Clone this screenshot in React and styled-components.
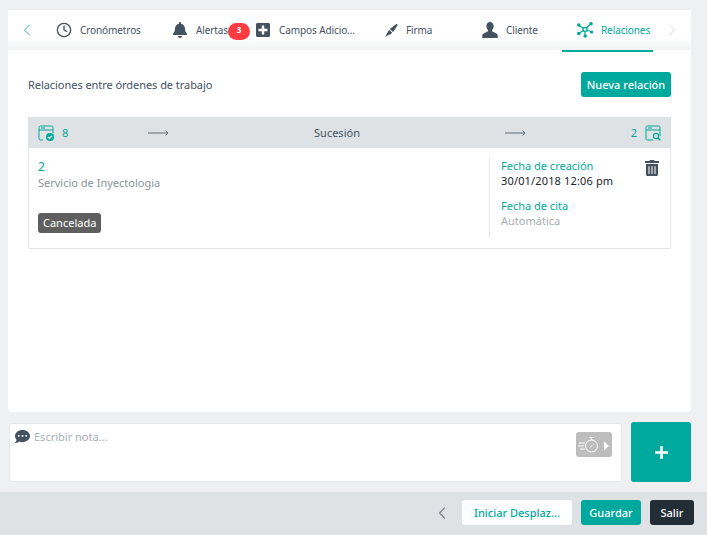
import React from "react";
import styled, { createGlobalStyle } from "styled-components";
import { FaBell, FaPlusSquare, FaTrashAlt, FaCommentDots } from "react-icons/fa";
import { FiClock, FiChevronLeft, FiChevronRight } from "react-icons/fi";

const teal = "#00a99d";
const slate = "#44525f";

const GlobalStyle = createGlobalStyle`
  html, body { margin: 0; padding: 0; height: 100%; background: #eef0f2; overflow: hidden; }
  body { font-family: "Noto Sans", "Open Sans", sans-serif; font-size: 11px; }
  * { box-sizing: border-box; }
`;

const Page = styled.div`
  width: 707px;
  height: 535px;
  display: flex;
  flex-direction: column;
  padding-top: 10px;
`;

const Panel = styled.div`
  margin: 0 16px 0 8px;
  height: 402px;
  background: #fff;
  border-radius: 4px;
  flex-shrink: 0;
`;

const TabBar = styled.div`
  height: 42px;
  display: flex;
  align-items: stretch;
  background: linear-gradient(#fff 70%, #f3f4f5 100%) 0 0 / 100% 40px no-repeat;
`;

const Chevron = styled.button`
  width: ${p => p.$width}px;
  height: 40px;
  padding: 0 0 0 ${p => p.$pad || 0}px;
  border: 0;
  background: none;
  color: ${p => p.$color};
  display: flex;
  align-items: center;
  justify-content: center;
`;

const Tab = styled.div`
  position: relative;
  width: ${p => p.$width}px;
  display: flex;
  align-items: center;
  gap: 8px;
  height: 42px;
  padding: 0 0 0 15px;
  color: ${p => (p.$active ? teal : slate)};
  border-bottom: 2px solid ${p => (p.$active ? teal : "transparent")};
  font-size: 10px;
  letter-spacing: -0.1px;
  white-space: nowrap;
  svg { flex-shrink: 0; }
`;

const Badge = styled.span`
  position: absolute;
  left: 71px;
  top: 13px;
  width: 22px;
  height: 17px;
  border-radius: 9px;
  background: #ff3b41;
  color: #fff;
  font-size: 8px;
  font-weight: 700;
  text-align: center;
  line-height: 14px;
`;

const Content = styled.div`
  padding: 20px 20px 0;
`;

const Heading = styled.div`
  display: flex;
  align-items: center;
  justify-content: space-between;
  height: 25px;
  margin-bottom: 20px;
  color: ${slate};
  letter-spacing: -0.05px;
`;

const Button = styled.button`
  height: 25px;
  padding: 0;
  width: ${p => p.$width}px;
  border: 0;
  border-radius: 3px;
  background: ${p => p.$bg || teal};
  color: ${p => p.$color || "#fff"};
  font: inherit;
  font-size: 11px;
  font-weight: 500;
`;

const Card = styled.div`
  border: 1px solid #e2e4e6;
  border-top: 0;
  border-radius: 2px;
`;

const CardHeader = styled.div`
  height: 31px;
  margin: 0 -1px;
  background: #dfe2e5;
  display: grid;
  grid-template-columns: 131px 1fr 156px;
  align-items: center;
  padding: 0 10px;
  color: ${slate};
`;

const Side = styled.div`
  display: flex;
  align-items: center;
  gap: 8px;
  color: ${teal};
  svg { flex-shrink: 0; }
`;

const Arrow = styled.svg`
  display: block;
  margin-left: ${p => p.$offset}px;
  margin-right: auto;
`;

const Center = styled.div`
  text-align: center;
`;

const CardBody = styled.div`
  display: flex;
  height: 100px;
  padding: 10px 10px 10px 9px;
`;

const Info = styled.div`
  flex: 1;
  display: flex;
  flex-direction: column;
  align-items: flex-start;
`;

const Code = styled.div`
  color: ${teal};
  font-size: 12px;
  line-height: 17px;
`;

const Service = styled.div`
  color: #8c949b;
  line-height: 15px;
`;

const Status = styled.span`
  margin-top: 23px;
  height: 20px;
  padding: 0 5px;
  line-height: 20px;
  border-radius: 3px;
  background: #5f5f5f;
  color: #fff;
`;

const Dates = styled.div`
  position: relative;
  width: 171px;
  padding: 0 0 0 11px;
  border-left: 1px solid #e2e4e6;
`;

const DateLabel = styled.div`
  color: ${teal};
  line-height: 15px;
  margin-top: ${p => (p.$spaced ? 10 : 0)}px;
`;

const DateValue = styled.div`
  color: ${p => (p.$muted ? "#a7adb2" : "#20262c")};
  line-height: 15px;
  letter-spacing: ${p => (p.$muted ? 0 : 0.15)}px;
`;

const Trash = styled.div`
  position: absolute;
  top: 2px;
  right: 0;
  color: ${slate};
  font-size: 16px;
  line-height: 0;
`;

const Composer = styled.div`
  display: flex;
  gap: 9px;
  margin: 10px 16px 0 9px;
  height: 60px;
`;

const NoteBox = styled.div`
  position: relative;
  flex: 1;
  margin-top: 1px;
  height: 59px;
  background: #fff;
  border: 1px solid #e6e8ea;
  border-radius: 3px;
  padding: 5px;
  display: flex;
  gap: 4px;
  color: #a9b0b6;
`;

const NoteIcon = styled.div`
  color: ${slate};
  font-size: 15px;
  line-height: 0;
`;

const Timer = styled.div`
  position: absolute;
  top: 8px;
  right: 9px;
  width: 36px;
  height: 25px;
  border-radius: 3px;
  background: #bdbdbd;
  display: flex;
  align-items: center;
  justify-content: center;
`;

const AddButton = styled.button`
  width: 60px;
  height: 60px;
  padding: 0;
  border: 0;
  border-radius: 3px;
  background: ${teal};
  display: flex;
  align-items: center;
  justify-content: center;
`;

const Footer = styled.div`
  flex: 1;
  margin-top: 10px;
  background: #dfe2e5;
  display: flex;
  align-items: flex-start;
  justify-content: flex-end;
  gap: 9px;
  padding: 8px 13px 0 0;
`;

const Back = styled.div`
  height: 25px;
  margin-right: 1px;
  color: #7b8790;
  display: flex;
  align-items: center;
`;

const BrowserCheck = () => (
  <svg width="16" height="16" viewBox="0 0 16 16" fill="none">
    <path d="M5 15H2.500A1.500 1.500 0 0 1 1 13.500v-11A1.500 1.500 0 0 1 2.500 1h11A1.500 1.500 0 0 1 15 2.500V8" stroke={teal} />
    <path d="M1 5h14" stroke={teal} />
    <path d="M3 3h4" stroke={teal} />
    <circle cx="12" cy="12" r="4" fill={teal} />
    <path d="M10 12l1.500 1.500L14 10.800" stroke="#fff" strokeWidth="1.200" />
  </svg>
);

const BrowserSearch = () => (
  <svg width="16" height="16" viewBox="0 0 16 16" fill="none" stroke={teal}>
    <path d="M8 15H2.500A1.500 1.500 0 0 1 1 13.500v-11A1.500 1.500 0 0 1 2.500 1h11A1.500 1.500 0 0 1 15 2.500V11" />
    <path d="M1 5h14M3 3h4" />
    <circle cx="11" cy="11" r="2.600" strokeWidth="1.200" />
    <path d="M13 13l2.300 2.300" strokeWidth="1.500" />
  </svg>
);

const LongArrow = ({ offset }) => (
  <Arrow $offset={offset} width="21" height="8" viewBox="0 0 21 8" fill="none" stroke="#5d6a75">
    <path d="M0 4h20M17.500 1.500L20 4l-2.500 2.500" />
  </Arrow>
);

const UserBust = () => (
  <svg width="16" height="16" viewBox="0 0 16 16" fill={slate}>
    <path d="M8 0c2.300 0 3.600 1.700 3.600 4 0 1.700-.7 3.200-1.500 4.100-.3.500-.2 1.200.4 1.500l3.400 1.600c1.200.6 1.800 1.300 1.800 2.300V16H.3v-2.500c0-1 .6-1.700 1.800-2.300l3.400-1.600c.6-.3.700-1 .4-1.500C5.100 7.200 4.400 5.700 4.400 4 4.400 1.700 5.700 0 8 0z" />
  </svg>
);

const Pen = () => (
  <svg width="13" height="13" viewBox="0 0 13 13" fill={slate}>
    <path d="M11 .2c.7-.5 1.900.6 1.500 1.400L8 8 4.800 5z" />
    <path d="M4 5.800l3.200 3-1.600 1.400-2.600 1-2.800 1.800 1.500-3z" />
  </svg>
);

const Network = () => (
  <svg width="16" height="16" viewBox="0 0 16 16" fill={teal} stroke={teal}>
    <path d="M1.500 3L8 7.500M14 1.500L8 7.500M15 10L8 7.500M8 14.500V7.500M1.500 11.500L8 7.500" strokeWidth="1.200" />
    <circle cx="8" cy="7.500" r="2" fill="#fbfbfb" strokeWidth="1.300" />
    <circle cx="1.800" cy="3" r="1.800" stroke="none" />
    <circle cx="14" cy="1.800" r="1.800" stroke="none" />
    <circle cx="14.500" cy="10" r="1.600" stroke="none" />
    <circle cx="8.200" cy="14" r="1.800" stroke="none" />
    <circle cx="1.800" cy="11.500" r="1.800" stroke="none" />
  </svg>
);

const Stopwatch = () => (
  <svg width="32" height="18" viewBox="0 0 32 18" fill="none" stroke="#fff">
    <path d="M1 7h6M0 10h6M2 13h5" />
    <circle cx="13.500" cy="10" r="6" />
    <path d="M11.500 1.500h4M13.500 1.500V4M12 11.500l3-3" />
    <path d="M26 5.500l5 4.500-5 4.500z" fill="#fff" stroke="none" />
  </svg>
);

const Plus = () => (
  <svg width="13" height="13" viewBox="0 0 13 13" fill="#fff">
    <path d="M5.200 0h2.600v5.200H13v2.600H7.800V13H5.200V7.800H0V5.200h5.200z" />
  </svg>
);

const tabs = [
  { label: "Cronómetros", width: 116, icon: <FiClock size={16} color={slate} /> },
  { label: "Alertas", width: 83, icon: <FaBell size={16} color={slate} />, badge: 3 },
  { label: "Campos Adicio...", width: 130, icon: <FaPlusSquare size={16} color={slate} /> },
  { label: "Firma", width: 97, icon: <Pen /> },
  { label: "Cliente", width: 95, icon: <UserBust /> },
  { label: "Relaciones", width: 91, icon: <Network />, active: true }
];

const App = () => (
  <Page>
    <GlobalStyle />
    <Panel>
      <TabBar>
        <Chevron $width={33} $pad={4} $color={teal}>
          <FiChevronLeft size={20} strokeWidth={1} />
        </Chevron>
        {tabs.map(tab => (
          <Tab key={tab.label} $width={tab.width} $active={tab.active}>
            {tab.icon}
            {tab.label}
            {tab.badge && <Badge>{tab.badge}</Badge>}
          </Tab>
        ))}
        <Chevron $width={38} $color="#cfd3d6">
          <FiChevronRight size={20} strokeWidth={1} />
        </Chevron>
      </TabBar>
      <Content>
        <Heading>
          Relaciones entre órdenes de trabajo
          <Button $width={90}>Nueva relación</Button>
        </Heading>
        <Card>
          <CardHeader>
            <Side>
              <BrowserCheck />8
              <LongArrow offset={72} />
            </Side>
            <Center>Sucesión</Center>
            <Side>
              <LongArrow offset={0} />2
              <BrowserSearch />
            </Side>
          </CardHeader>
          <CardBody>
            <Info>
              <Code>2</Code>
              <Service>Servicio de Inyectologia</Service>
              <Status>Cancelada</Status>
            </Info>
            <Dates>
              <DateLabel>Fecha de creación</DateLabel>
              <DateValue>30/01/2018 12:06 pm</DateValue>
              <DateLabel $spaced>Fecha de cita</DateLabel>
              <DateValue $muted>Automática</DateValue>
              <Trash>
                <FaTrashAlt />
              </Trash>
            </Dates>
          </CardBody>
        </Card>
      </Content>
    </Panel>
    <Composer>
      <NoteBox>
        <NoteIcon>
          <FaCommentDots />
        </NoteIcon>
        Escribir nota...
        <Timer>
          <Stopwatch />
        </Timer>
      </NoteBox>
      <AddButton>
        <Plus />
      </AddButton>
    </Composer>
    <Footer>
      <Back>
        <FiChevronLeft size={20} strokeWidth={1.500} />
      </Back>
      <Button $width={110} $bg="#fff" $color={teal}>
        Iniciar Desplaz...
      </Button>
      <Button $width={60}>Guardar</Button>
      <Button $width={44} $bg="#232d35">
        Salir
      </Button>
    </Footer>
  </Page>
);

export default App;
